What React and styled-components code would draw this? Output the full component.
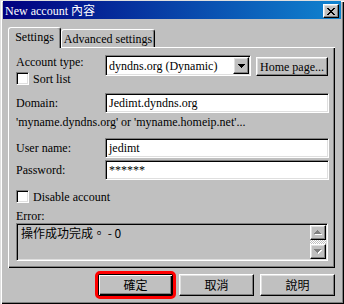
import React from 'react';
import styled, { createGlobalStyle } from 'styled-components';

const serif = `"Liberation Serif", "Noto Sans CJK TC", serif`;
const cjk = `"Noto Sans CJK TC", "Liberation Sans", sans-serif`;

const Global = createGlobalStyle`
  html, body { margin: 0; padding: 0; background: #c0c0c0; }
  body { font-family: ${serif}; font-size: 12px; color: #000; }
  * { box-sizing: border-box; }
`;

const raised = `
  border: 1px solid;
  border-color: #fff #000 #000 #fff;
  box-shadow: inset -1px -1px #808080, inset 1px 1px #dfdfdf;
`;
const sunken = `
  border: 1px solid;
  border-color: #808080 #fff #fff #808080;
  box-shadow: inset 1px 1px #000, inset -1px -1px #dfdfdf;
`;

const Window = styled.div`
  width: 344px;
  height: 304px;
  padding: 1px 3px 0 3px;
  background: #c0c0c0;
  box-shadow: inset 1px 1px #dfdfdf, inset 2px 2px #fff, inset -1px -1px #000, inset -2px -2px #808080;
  display: flex;
  flex-direction: column;
`;

const TitleBar = styled.div`
  height: 18px;
  display: flex;
  align-items: flex-start;
  justify-content: space-between;
  padding: 0 2px;
  background: linear-gradient(to right, #000080, #1084d0);
`;

const Title = styled.span`
  color: #fff;
  font: 12px/14px ${serif};
  margin-top: 3px;
`;

const CloseButton = styled.div`
  width: 16px;
  height: 14px;
  margin-top: 3px;
  background: #c0c0c0;
  ${raised}
  display: flex;
  align-items: center;
  justify-content: center;
`;

const Body = styled.div`
  padding: 8px 0 0 5px;
  display: flex;
  flex-direction: column;
  width: 332px;
`;

const TabStrip = styled.div`
  display: flex;
  align-items: flex-end;
  height: 20px;
`;

const Tab = styled.div`
  position: relative;
  z-index: ${p => (p.$active ? 2 : 1)};
  width: ${p => p.$w}px;
  height: ${p => (p.$active ? 21 : 18)}px;
  margin-bottom: ${p => (p.$active ? -1 : 0)}px;
  padding-top: 2px;
  text-align: center;
  background: #c0c0c0;
  border-top: 1px solid #fff;
  border-left: 1px solid #fff;
  border-right: 1px solid #000;
  border-radius: 3px 3px 0 0;
  box-shadow: inset -1px 0 #808080;
  font: 12px/14px ${serif};
  white-space: nowrap;
`;

const Panel = styled.div`
  width: 327px;
  height: 221px;
  padding: 8px 6px 0 8px;
  box-shadow: inset 1px 1px #fff, inset -1px -1px #000, inset -2px -2px #808080;
  display: flex;
  flex-direction: column;
`;

const TypeGrid = styled.div`
  display: grid;
  grid-template-columns: 89px 146px 77px;
  height: 30px;
`;

const LabelStack = styled.div`
  display: flex;
  flex-direction: column;
`;

const Label = styled.div`
  font: 12px/14px ${serif};
  white-space: nowrap;
  margin-top: ${p => p.$mt || 0}px;
  width: ${p => (p.$w ? `${p.$w}px` : 'auto')};
  flex: none;
`;

const CheckRow = styled.label`
  display: flex;
  align-items: center;
  gap: 4px;
  height: 13px;
  margin-top: ${p => p.$mt || 0}px;
  font: 12px/14px ${serif};
  white-space: nowrap;
`;

const CheckBox = styled.span`
  width: 13px;
  height: 13px;
  background: #fff;
  ${sunken}
  flex: none;
`;

const Combo = styled.div`
  height: 21px;
  width: 146px;
  padding: 1px;
  background: #fff;
  ${sunken}
  display: flex;
  align-items: center;
`;

const ComboText = styled.span`
  flex: 1;
  padding-left: 2px;
  font: 12px/14px ${serif};
  white-space: nowrap;
  overflow: hidden;
`;

const DropButton = styled.div`
  width: 16px;
  height: 17px;
  background: #c0c0c0;
  ${raised}
  display: flex;
  align-items: center;
  justify-content: center;
  flex: none;
`;

const PushButton = styled.div`
  width: ${p => p.$w}px;
  height: ${p => p.$h}px;
  background: #c0c0c0;
  ${raised}
  display: flex;
  align-items: center;
  justify-content: center;
  font: 12px/14px ${p => (p.$cjk ? cjk : serif)};
  white-space: nowrap;
  justify-self: end;
  align-self: start;
  margin-top: ${p => p.$mt || 0}px;
  ${p =>
    p.$default &&
    `border: 1px solid #000; box-shadow: inset 1px 1px #fff, inset -1px -1px #000, inset -2px -2px #808080;`}
`;

const FieldRow = styled.div`
  display: flex;
  align-items: center;
  margin-top: ${p => p.$mt || 0}px;
`;

const Input = styled.div`
  width: 224px;
  height: 20px;
  padding: 0 3px;
  background: #fff;
  ${sunken}
  display: flex;
  align-items: center;
  font: 12px/14px ${serif};
  white-space: nowrap;
`;

const Hint = styled.div`
  margin-top: 2px;
  font: 12px/14px ${serif};
  white-space: nowrap;
`;

const ErrorBox = styled.div`
  width: 312px;
  height: 38px;
  padding: 1px;
  background: #c0c0c0;
  ${sunken}
  display: flex;
`;

const ErrorText = styled.div`
  flex: 1;
  padding: 1px 3px;
  font: 12px/14px ${cjk};
  white-space: nowrap;
`;

const ScrollBar = styled.div`
  width: 16px;
  display: flex;
  flex-direction: column;
`;

const ScrollButton = styled.div`
  height: 15px;
  background: #c0c0c0;
  ${raised}
  display: flex;
  align-items: center;
  justify-content: center;
`;

const ScrollTrack = styled.div`
  flex: 1;
  background: repeating-conic-gradient(#fff 0 25%, #c0c0c0 0 50%) 0 0 / 2px 2px;
`;

const ButtonRow = styled.div`
  display: flex;
  justify-content: flex-end;
  gap: 6px;
  margin-top: 6px;
  width: 327px;
`;

const Highlight = styled.div`
  position: relative;
  &::after {
    content: '';
    position: absolute;
    inset: -3px;
    border: 3px solid #ff0000;
    border-radius: 5px;
    pointer-events: none;
  }
`;

const CloseIcon = () => (
  <svg width="8" height="7" viewBox="0 0 8 7" shapeRendering="crispEdges">
    <path
      fill="#000"
      d="M0 0h2v1H0zM6 0h2v1H6zM1 1h2v1H1zM5 1h2v1H5zM2 2h4v1H2zM3 3h2v1H3zM2 4h4v1H2zM1 5h2v1H1zM5 5h2v1H5zM0 6h2v1H0zM6 6h2v1H6z"
    />
  </svg>
);

const DownArrow = ({ color = '#000' }) => (
  <svg width="7" height="4" viewBox="0 0 7 4" shapeRendering="crispEdges">
    <path fill={color} d="M0 0h7v1H0zM1 1h5v1H1zM2 2h3v1H2zM3 3h1v1H3z" />
  </svg>
);

const DisabledArrow = ({ up }) => (
  <svg width="8" height="5" viewBox="0 0 8 5" shapeRendering="crispEdges">
    {up ? (
      <>
        <path fill="#fff" d="M4 1h1v1H4zM3 2h3v1H3zM2 3h5v1H2zM1 4h7v1H1z" />
        <path fill="#808080" d="M3 0h1v1H3zM2 1h3v1H2zM1 2h5v1H1zM0 3h7v1H0z" />
      </>
    ) : (
      <>
        <path fill="#fff" d="M1 1h7v1H1zM2 2h5v1H2zM3 3h3v1H3zM4 4h1v1H4z" />
        <path fill="#808080" d="M0 0h7v1H0zM1 1h5v1H1zM2 2h3v1H2zM3 3h1v1H3z" />
      </>
    )}
  </svg>
);

export default function App() {
  return (
    <>
      <Global />
      <Window>
        <TitleBar>
          <Title>New account 內容</Title>
          <CloseButton>
            <CloseIcon />
          </CloseButton>
        </TitleBar>
        <Body>
          <TabStrip>
            <Tab $active $w={53}>Settings</Tab>
            <Tab $w={94}>Advanced settings</Tab>
          </TabStrip>
          <Panel>
            <TypeGrid>
              <LabelStack>
                <Label>Account type:</Label>
                <CheckRow $mt={3}>
                  <CheckBox />
                  Sort list
                </CheckRow>
              </LabelStack>
              <Combo>
                <ComboText>dyndns.org (Dynamic)</ComboText>
                <DropButton>
                  <DownArrow />
                </DropButton>
              </Combo>
              <PushButton $w={72} $h={19} $mt={2}>
                Home page...
              </PushButton>
            </TypeGrid>
            <FieldRow $mt={8}>
              <Label $w={89}>Domain:</Label>
              <Input>Jedimt.dyndns.org</Input>
            </FieldRow>
            <Hint>'myname.dyndns.org' or 'myname.homeip.net'...</Hint>
            <FieldRow $mt={9}>
              <Label $w={89}>User name:</Label>
              <Input>jedimt</Input>
            </FieldRow>
            <FieldRow $mt={2}>
              <Label $w={89}>Password:</Label>
              <Input>******</Input>
            </FieldRow>
            <CheckRow $mt={10}>
              <CheckBox />
              Disable account
            </CheckRow>
            <Label $mt={6}>Error:</Label>
            <ErrorBox>
              <ErrorText>操作成功完成。 - 0</ErrorText>
              <ScrollBar>
                <ScrollButton>
                  <DisabledArrow up />
                </ScrollButton>
                <ScrollTrack />
                <ScrollButton>
                  <DisabledArrow />
                </ScrollButton>
              </ScrollBar>
            </ErrorBox>
          </Panel>
          <ButtonRow>
            <Highlight>
              <PushButton $w={75} $h={22} $cjk $default>
                確定
              </PushButton>
            </Highlight>
            <PushButton $w={75} $h={22} $cjk>
              取消
            </PushButton>
            <PushButton $w={75} $h={22} $cjk>
              說明
            </PushButton>
          </ButtonRow>
        </Body>
      </Window>
    </>
  );
}
